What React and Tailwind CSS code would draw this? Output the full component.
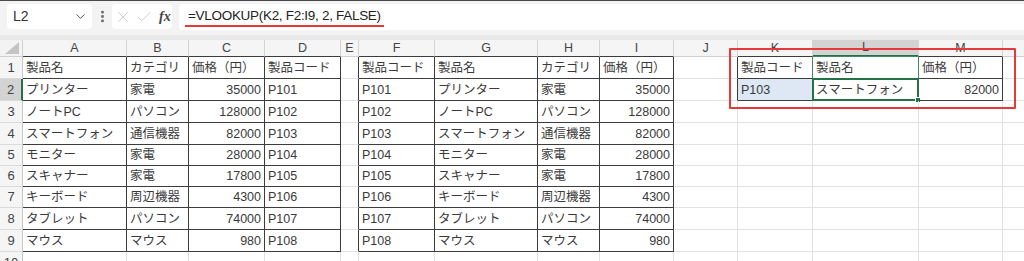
import React from "react";
import { ChevronDown, EllipsisVertical, X, Check } from "lucide-react";

const COLS = [
  { k: "A", w: "w-[104px]" },
  { k: "B", w: "w-[62px]" },
  { k: "C", w: "w-[76px]" },
  { k: "D", w: "w-[76px]" },
  { k: "E", w: "w-[18px]" },
  { k: "F", w: "w-[76px]" },
  { k: "G", w: "w-[103px]" },
  { k: "H", w: "w-[62px]" },
  { k: "I", w: "w-[74px]" },
  { k: "J", w: "w-[64px]" },
  { k: "K", w: "w-[75px]" },
  { k: "L", w: "w-[106px]" },
  { k: "M", w: "w-[84px]" },
  { k: "N", w: "w-[200px]" },
];

const ROWS = [
  { n: 1, h: "h-[22px]" },
  { n: 2, h: "h-[22px]" },
  { n: 3, h: "h-[22px]" },
  { n: 4, h: "h-[22px]" },
  { n: 5, h: "h-[21px]" },
  { n: 6, h: "h-[21px]" },
  { n: 7, h: "h-[21px]" },
  { n: 8, h: "h-[22px]" },
  { n: 9, h: "h-[22px]" },
  { n: 10, h: "h-[22px]" },
];

const products = [
  ["P101", "プリンター", "家電", 35000],
  ["P102", "ノートPC", "パソコン", 128000],
  ["P103", "スマートフォン", "通信機器", 82000],
  ["P104", "モニター", "家電", 28000],
  ["P105", "スキャナー", "家電", 17800],
  ["P106", "キーボード", "周辺機器", 4300],
  ["P107", "タブレット", "パソコン", 74000],
  ["P108", "マウス", "マウス", 980],
];

// build cell contents keyed like "A1"
const cells = {};
["製品名", "カテゴリ", "価格（円）", "製品コード"].forEach((t, i) => (cells["ABCD"[i] + 1] = { t }));
["製品コード", "製品名", "カテゴリ", "価格（円）"].forEach((t, i) => (cells["FGHI"[i] + 1] = { t }));
["製品コード", "製品名", "価格（円）"].forEach((t, i) => (cells["KLM"[i] + 1] = { t }));
products.forEach(([code, name, cat, price], i) => {
  const r = i + 2;
  cells["A" + r] = { t: name };
  cells["B" + r] = { t: cat };
  cells["C" + r] = { t: String(price), right: true };
  cells["D" + r] = { t: code };
  cells["F" + r] = { t: code };
  cells["G" + r] = { t: name };
  cells["H" + r] = { t: cat };
  cells["I" + r] = { t: String(price), right: true };
});
cells.K2 = { t: "P103" };
cells.L2 = { t: "スマートフォン" };
cells.M2 = { t: "82000", right: true };

function inTable(r, c) {
  if (r >= 1 && r <= 9 && ((c >= 0 && c <= 3) || (c >= 5 && c <= 8))) return true;
  if (r >= 1 && r <= 2 && c >= 10 && c <= 12) return true;
  return false;
}

const font = "font-['Liberation_Sans','Noto_Sans_CJK_JP',sans-serif]";

function Toolbar() {
  return (
    <div className="border-t border-t-[#4a4a4a] bg-[#f3f3f3]">
      <div className="flex items-center h-[34px] pb-[3px] pl-[7px]">
        <div className="flex items-center justify-between w-[85px] h-[25px] bg-white rounded-[4px] pl-[6px] pr-[4px] text-[14px] text-[#333]">
          <span>L2</span>
          <ChevronDown size={15} strokeWidth={1.6} className="text-[#555]" />
        </div>
        <div className="w-[20px] flex justify-center text-[#666]">
          <EllipsisVertical size={15} strokeWidth={2.6} />
        </div>
        <div className="flex items-center gap-[3px] w-[60px] h-[25px] bg-white rounded-[4px] pl-[2px]">
          <X size={18} strokeWidth={1} className="text-[#bdbdbd]" />
          <Check size={18} strokeWidth={1} className="text-[#bdbdbd]" />
          <span className="font-['Liberation_Serif',serif] italic font-bold text-[14px] text-[#444] ml-[3px]">fx</span>
        </div>
        <div className="flex-1 h-[26px] ml-[7px] bg-white rounded-l-[4px] flex items-center pl-[6px]">
          <span className="font-['Liberation_Sans',sans-serif] text-[13.5px] tracking-[-0.3px] text-[#222] leading-[18px] border-b-2 border-b-[#e53935] px-[3px]">
            =VLOOKUP(K2, F2:I9, 2, FALSE)
          </span>
        </div>
      </div>
      <div className="h-[5px] bg-[#e8e8e8]" />
    </div>
  );
}

function HeaderRow() {
  return (
    <div className="flex h-[17px]">
      <div className="shrink-0 w-[23px] bg-[#f3f3f3] border-r border-b border-[#d0d0d0] relative">
        <svg width="14" height="12" viewBox="0 0 14 12" className="absolute right-[3px] bottom-[2px]">
          <polygon points="14,0 14,12 0,12" fill="#c4c4c4" />
        </svg>
      </div>
      {COLS.map((col, ci) => {
        const sel = col.k === "L";
        return (
          <div
            key={col.k}
            className={
              "shrink-0 flex items-center justify-center border-r border-r-[#d4d4d4] text-[12.5px] text-[#444] " +
              col.w +
              (sel ? " bg-[#d3d3d3] border-b-2 border-b-[#217346]" : " bg-[#f5f5f5] border-b") +
              (!sel && inTable(1, ci) ? " border-b-[#3c3c3c]" : !sel ? " border-b-[#d0d0d0]" : "")
            }
          >
            {col.k}
          </div>
        );
      })}
    </div>
  );
}

function Row({ row }) {
  const r = row.n;
  const selRow = r === 2;
  return (
    <div className={"flex " + row.h}>
      <div
        className={
          "shrink-0 w-[23px] flex items-center justify-center border-b border-b-[#dadada] text-[13px] text-[#444] " +
          (selRow ? "bg-[#d3d3d3] border-r-2 border-r-[#217346]" : "bg-[#f5f5f5] border-r border-r-[#c8c8c8]")
        }
      >
        {r}
      </div>
      {COLS.map((col, ci) => {
        const id = col.k + r;
        const cell = cells[id];
        const darkR = inTable(r, ci) || inTable(r, ci + 1);
        const darkB = inTable(r, ci) || inTable(r + 1, ci);
        return (
          <div
            key={id}
            className={
              "relative shrink-0 flex items-center pt-[1px] px-[3px] whitespace-nowrap border-r border-b text-[12.5px] text-[#3a3a3a] " +
              col.w +
              (darkR ? " border-r-[#3c3c3c]" : " border-r-[#e2e2e2]") +
              (darkB ? " border-b-[#3c3c3c]" : " border-b-[#e2e2e2]") +
              (cell && cell.right ? " justify-end" : "") +
              (id === "K2" ? " bg-[#dde8f4]" : "")
            }
          >
            {cell ? cell.t : null}
            {id === "L1" && (
              <div className="absolute left-[-1px] top-[-1px] right-[-1px] bottom-0 border border-[#3f8a5e] border-b-0 pointer-events-none" />
            )}
            {id === "L2" && (
              <div className="absolute left-[-1px] top-[-1px] right-[-1px] bottom-[-1px] border-2 border-[#217346] pointer-events-none">
                <div className="absolute right-[-4px] bottom-[-4px] w-[6px] h-[6px] bg-[#217346] border border-white" />
              </div>
            )}
          </div>
        );
      })}
    </div>
  );
}

export default function App() {
  return (
    <div className={"w-[1024px] h-[261px] overflow-hidden bg-white " + font}>
      <Toolbar />
      <div className="relative">
        <HeaderRow />
        {ROWS.map((row) => (
          <Row key={row.n} row={row} />
        ))}
        {/* red annotation box */}
        <div className="absolute left-[729px] top-[8px] w-[287px] h-[61px] border-[2.5px] border-[#e63a3a] rounded-[1px] pointer-events-none" />
      </div>
    </div>
  );
}
